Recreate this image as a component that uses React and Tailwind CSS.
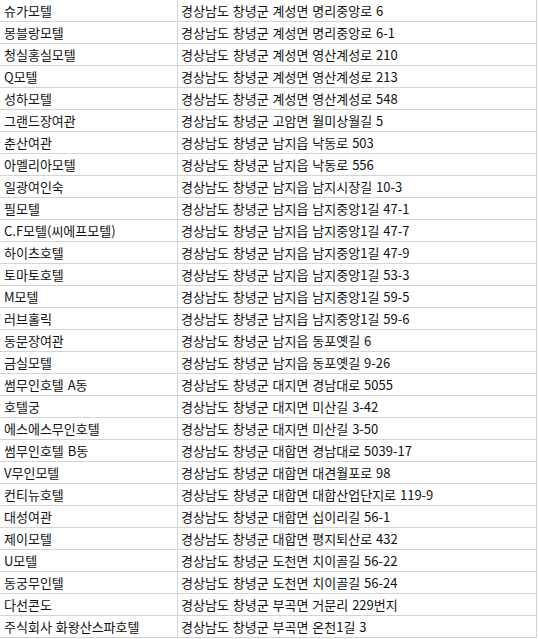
import React from 'react';

const rows = [
    ['슈가모텔', '경상남도 창녕군 계성면 명리중앙로 6'],
    ['몽블랑모텔', '경상남도 창녕군 계성면 명리중앙로 6-1'],
    ['청실홍실모텔', '경상남도 창녕군 계성면 영산계성로 210'],
    ['Q모텔', '경상남도 창녕군 계성면 영산계성로 213'],
    ['성하모텔', '경상남도 창녕군 계성면 영산계성로 548'],
    ['그랜드장여관', '경상남도 창녕군 고암면 월미상월길 5'],
    ['춘산여관', '경상남도 창녕군 남지읍 낙동로 503'],
    ['아멜리아모텔', '경상남도 창녕군 남지읍 낙동로 556'],
    ['일광여인숙', '경상남도 창녕군 남지읍 남지시장길 10-3'],
    ['필모텔', '경상남도 창녕군 남지읍 남지중앙1길 47-1'],
    ['C.F모텔(씨에프모텔)', '경상남도 창녕군 남지읍 남지중앙1길 47-7'],
    ['하이츠호텔', '경상남도 창녕군 남지읍 남지중앙1길 47-9'],
    ['토마토호텔', '경상남도 창녕군 남지읍 남지중앙1길 53-3'],
    ['M모텔', '경상남도 창녕군 남지읍 남지중앙1길 59-5'],
    ['러브홀릭', '경상남도 창녕군 남지읍 남지중앙1길 59-6'],
    ['동문장여관', '경상남도 창녕군 남지읍 동포옛길 6'],
    ['금실모텔', '경상남도 창녕군 남지읍 동포옛길 9-26'],
    ['썸무인호텔 A동', '경상남도 창녕군 대지면 경남대로 5055'],
    ['호텔궁', '경상남도 창녕군 대지면 미산길 3-42'],
    ['에스에스무인호텔', '경상남도 창녕군 대지면 미산길 3-50'],
    ['썸무인호텔 B동', '경상남도 창녕군 대합면 경남대로 5039-17'],
    ['V무인모텔', '경상남도 창녕군 대합면 대견월포로 98'],
    ['컨티뉴호텔', '경상남도 창녕군 대합면 대합산업단지로 119-9'],
    ['대성여관', '경상남도 창녕군 대합면 십이리길 56-1'],
    ['제이모텔', '경상남도 창녕군 대합면 평지퇴산로 432'],
    ['U모텔', '경상남도 창녕군 도천면 치이골길 56-22'],
    ['동궁무인텔', '경상남도 창녕군 도천면 치이골길 56-24'],
    ['다선콘도', '경상남도 창녕군 부곡면 거문리 229번지'],
    ['주식회사 화왕산스파호텔', '경상남도 창녕군 부곡면 온천1길 3'],
];

export default function App() {
    return (
        <div className="w-[538px] h-[639px] bg-white overflow-hidden text-[13px] text-[#111] [word-spacing:1px] font-['Noto_Sans_CJK_KR','Noto_Sans',sans-serif]">
            <div className="w-[537px] border-r border-[#d4d4d4]">
                {rows.map(([name, addr]) => (
                    <div key={name} className="flex h-[22px] border-b border-[#d4d4d4]">
                        <div className="w-[178px] shrink-0 border-r border-[#d4d4d4] pl-[4px] flex items-center whitespace-nowrap">
                            {name}
                        </div>
                        <div className="flex-1 pl-[3px] flex items-center whitespace-nowrap">
                            {addr}
                        </div>
                    </div>
                ))}
            </div>
        </div>
    );
}
